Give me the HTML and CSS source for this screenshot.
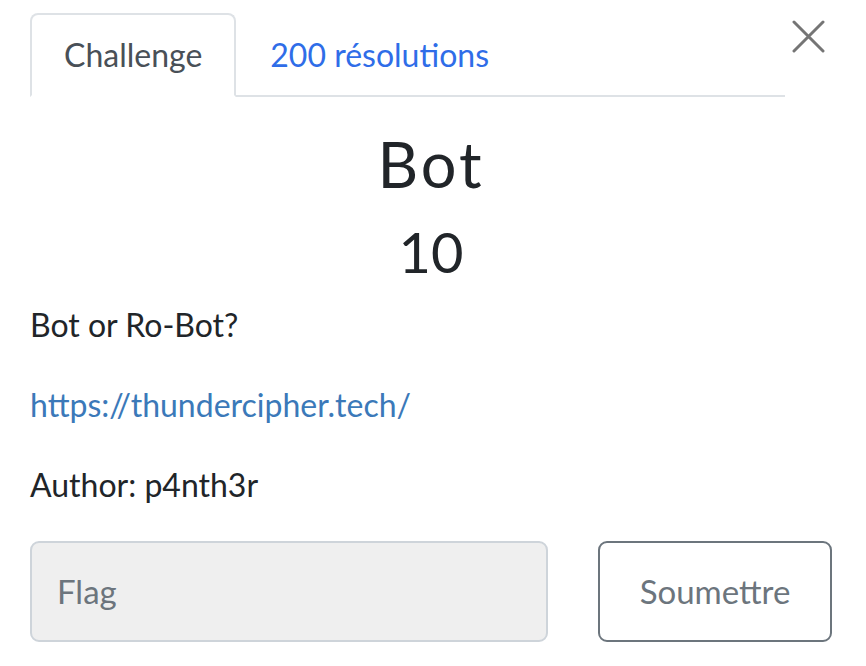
FILE: index.html
```html
<!DOCTYPE html>
<html lang="fr">
<head>
<meta charset="utf-8">
<title>Bot</title>
<link rel="stylesheet" href="styles.css">
</head>
<body>
<div class="modal-body">
  <div class="header">
    <ul class="nav-tabs">
      <li class="tab active">Challenge</li>
      <li class="tab link">200 résolutions</li>
    </ul>
    <button class="close" aria-label="Close">
      <svg width="33" height="33" viewBox="0 0 33 33"><path d="M2 2 L31 31 M31 2 L2 31" stroke="#757575" stroke-width="3" stroke-linecap="round" fill="none"/></svg>
    </button>
  </div>
  <h3 class="challenge-name">Bot</h3>
  <h4 class="challenge-value">10</h4>
  <div class="description">
    <p>Bot or Ro-Bot?</p>
    <p><a href="#">https://thundercipher.tech/</a></p>
    <p>Author: p4nth3r</p>
  </div>
  <form class="submit-row">
    <input class="flag-input" type="text" placeholder="Flag">
    <button class="submit-btn" type="button">Soumettre</button>
  </form>
</div>
</body>
</html>
```
FILE: styles.css
```css
* { box-sizing: border-box; }
html, body { margin: 0; padding: 0; background: #fff; }
body {
  font-family: Lato, "Open Sans", sans-serif;
  color: #212529;
  font-size: 32px;
  line-height: 48px;
}
.modal-body {
  padding: 0 34px 0 30px;
}
.header {
  display: flex;
  align-items: flex-start;
}
.nav-tabs {
  flex: 1;
  display: flex;
  list-style: none;
  margin: 13px 0 0 0;
  padding: 0;
  border-bottom: 2px solid #dee2e6;
}
.tab {
  font-size: 32px;
  line-height: 48px;
  padding: 16px 32px;
  border: 2px solid transparent;
  border-radius: 8px 8px 0 0;
  margin-bottom: -2px;
}
.tab.active {
  color: #495057;
  border-color: #dee2e6 #dee2e6 #fff;
  background: #fff;
}
.tab.link {
  color: #2f6de8;
}
.close {
  width: 47px;
  height: 60px;
  border: 0;
  background: none;
  padding: 20px 0 0 7px;
  display: flex;
  align-items: flex-start;
  justify-content: flex-start;
}
.close svg { display: block; }
.challenge-name {
  margin: 29px 0 16px;
  font-size: 63px;
  line-height: 1.2;
  font-weight: 400;
  text-align: center;
  letter-spacing: 3px;
}
.challenge-value {
  margin: 0 0 16px;
  font-size: 56px;
  line-height: 1.2;
  font-weight: 400;
  text-align: center;
}
.description p {
  margin: 0 0 32px;
}
.description a {
  color: #3b79b9;
  text-decoration: none;
}
.submit-row {
  display: flex;
  gap: 50px;
  margin: 0;
}
.flag-input {
  flex: 1;
  height: 101px;
  border: 2px solid #ced4da;
  border-radius: 9px;
  background: #efefef;
  font-family: Lato, sans-serif;
  font-size: 33px;
  padding: 0 25px;
  color: #495057;
  outline: none;
}
.flag-input::placeholder { color: #6c757d; }
.submit-btn {
  width: 234px;
  height: 101px;
  border: 2px solid #6c757d;
  border-radius: 9px;
  background: #fff;
  color: #6c757d;
  font-family: Lato, sans-serif;
  font-size: 33px;
  padding: 0;
}
```
